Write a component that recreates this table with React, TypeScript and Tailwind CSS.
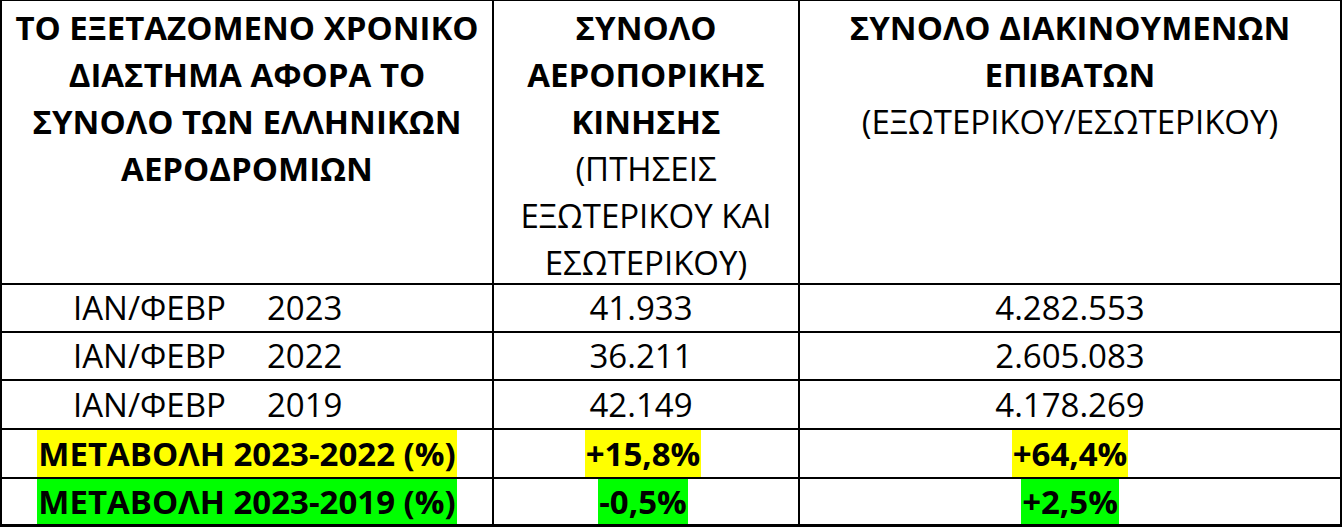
import React from "react";

const font = { fontFamily: '"Open Sans", "Noto Sans", sans-serif' };

function HL({ children, color }: { children: React.ReactNode; color: string }) {
  return (
    <span className={`flex items-center self-stretch px-[1px] ${color}`}>{children}</span>
  );
}

const rows = [
  { y: "2023", a: "41.933", b: "4.282.553", h: "h-[46px]" },
  { y: "2022", a: "36.211", b: "2.605.083", h: "h-[46px]" },
  { y: "2019", a: "42.149", b: "4.178.269", h: "h-[47px]" },
];

export default function App() {
  return (
    <div className="w-[1342px] h-[530px] bg-white text-black font-['Open_Sans','Noto_Sans',sans-serif]" style={font}>
      <div className="grid grid-cols-[490px_304px_540px] gap-[2px] bg-black pt-[1px] px-[2px] pb-[3px] w-[1342px]">
        {/* Header */}
        <div className="bg-white h-[282px] pt-[3px] text-[33px] leading-[47px] font-bold text-center whitespace-nowrap">
          <div>ΤΟ ΕΞΕΤΑΖΟΜΕΝΟ ΧΡΟΝΙΚΟ</div>
          <div>ΔΙΑΣΤΗΜΑ ΑΦΟΡΑ ΤΟ</div>
          <div>ΣΥΝΟΛΟ ΤΩΝ ΕΛΛΗΝΙΚΩΝ</div>
          <div>ΑΕΡΟΔΡΟΜΙΩΝ</div>
        </div>
        <div className="bg-white h-[282px] pt-[3px] text-[33px] leading-[47px] text-center whitespace-nowrap">
          <div className="font-bold">ΣΥΝΟΛΟ</div>
          <div className="font-bold">ΑΕΡΟΠΟΡΙΚΗΣ</div>
          <div className="font-bold">ΚΙΝΗΣΗΣ</div>
          <div>(ΠΤΗΣΕΙΣ</div>
          <div>ΕΞΩΤΕΡΙΚΟΥ ΚΑΙ</div>
          <div>ΕΣΩΤΕΡΙΚΟΥ)</div>
        </div>
        <div className="bg-white h-[282px] pt-[3px] text-[33px] leading-[47px] text-center whitespace-nowrap">
          <div className="font-bold">ΣΥΝΟΛΟ ΔΙΑΚΙΝΟΥΜΕΝΩΝ</div>
          <div className="font-bold">ΕΠΙΒΑΤΩΝ</div>
          <div>(ΕΞΩΤΕΡΙΚΟΥ/ΕΣΩΤΕΡΙΚΟΥ)</div>
        </div>

        {rows.map((r) => (
          <React.Fragment key={r.y}>
            <div className={`bg-white ${r.h} flex items-center pl-[71px] text-[33px] whitespace-nowrap`}>
              <span className="inline-block w-[194px]">ΙΑΝ/ΦΕΒΡ</span>
              <span>{r.y}</span>
            </div>
            <div className={`bg-white ${r.h} flex items-center justify-center pr-[10px] text-[33px]`}>
              {r.a}
            </div>
            <div className={`bg-white ${r.h} flex items-center justify-center text-[33px]`}>{r.b}</div>
          </React.Fragment>
        ))}

        <div className="bg-white h-[47px] flex justify-center text-[33px] font-bold whitespace-nowrap">
          <HL color="bg-[#ffff00]">ΜΕΤΑΒΟΛΗ 2023-2022 (%)</HL>
        </div>
        <div className="bg-white h-[47px] flex justify-center pr-[6px] text-[33px] font-bold">
          <HL color="bg-[#ffff00]">+15,8%</HL>
        </div>
        <div className="bg-white h-[47px] flex justify-center text-[33px] font-bold">
          <HL color="bg-[#ffff00]">+64,4%</HL>
        </div>

        <div className="bg-white h-[45px] flex justify-center text-[33px] font-bold whitespace-nowrap">
          <HL color="bg-[#00ff00]">ΜΕΤΑΒΟΛΗ 2023-2019 (%)</HL>
        </div>
        <div className="bg-white h-[45px] flex justify-center pr-[6px] text-[33px] font-bold">
          <HL color="bg-[#00ff00]">-0,5%</HL>
        </div>
        <div className="bg-white h-[45px] flex justify-center text-[33px] font-bold">
          <HL color="bg-[#00ff00]">+2,5%</HL>
        </div>
      </div>
    </div>
  );
}
